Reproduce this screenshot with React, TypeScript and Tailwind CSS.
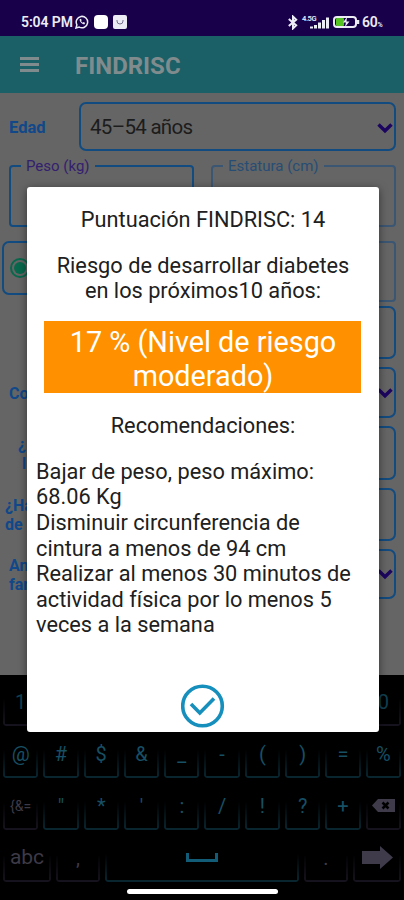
import { ReactNode } from "react";

const Chevron = () => (
  <svg
    className="h-3 w-4 shrink-0"
    viewBox="0 0 16 12"
    fill="none"
    stroke="#1c0560"
    strokeWidth="3.4"
  >
    <path d="M1.500 2.500 8 8.800l6.500-6.300" />
  </svg>
);

const StatusBar = () => (
  <div className="flex h-9 items-center bg-[#18004a] pt-2 pl-[21px] pr-[19px] text-[#ececf4]">
    <span className="w-[52px] whitespace-nowrap text-[14px] font-semibold tracking-[-0.1px]">
      5:04 PM
    </span>
    <svg className="ml-[2px] h-[14px] w-[14px]" viewBox="0 0 14 14" fill="none">
      <path
        d="M1 13l.9-3.2A5.7 5.7 0 1 1 4.200 12.100z"
        stroke="currentColor"
        strokeWidth="1.500"
      />
      <path
        d="M4.700 4.200c-.5 2.400 2.600 5.500 5 5l.3-1.400-1.500-.7-.7.7C6.900 7.300 6.400 6.700 6.100 6l.6-.7L6 3.700z"
        fill="currentColor"
      />
    </svg>
    <div className="ml-[5px] h-[14px] w-[14px] rounded-[4px] bg-white" />
    <div className="ml-[5px] flex h-[14px] w-[14px] items-center justify-center rounded-[2px] bg-[#ececf4]">
      <svg className="h-2 w-2" viewBox="0 0 8 8" fill="none" stroke="#77728f">
        <path d="M1 2v1a3 3 0 0 0 6 0V2" />
      </svg>
    </div>
    <svg
      className="ml-auto h-[15px] w-[10px]"
      viewBox="0 0 10 15"
      fill="none"
      stroke="currentColor"
      strokeWidth="2"
    >
      <path d="M.8 4l7.400 6.400L5 13.400V1.600L8.200 4.600.8 11" />
    </svg>
    <div className="ml-1 flex h-[14px] w-[27px] items-end">
      <div className="flex h-full flex-col text-[7.500px] font-semibold leading-[7px] tracking-[-0.4px]">
        <span className="w-[15px] whitespace-nowrap">4.5G</span>
      </div>
      <svg className="-ml-[8px] h-[13px] w-5 shrink-0" viewBox="0 0 20 13" fill="currentColor">
        <path d="M1 10.500h3v2H1zM5 9h3v3.500H5zM9 6.500h3v6H9zM13 4h3v8.500h-3zM17 1.500h3v11h-3z" />
      </svg>
    </div>
    <svg className="ml-1 h-3 w-[27px]" viewBox="0 0 27 12" fill="none">
      <rect x="1" y="1" width="22" height="10" rx="3" stroke="currentColor" strokeWidth="2" />
      <rect x="3" y="2" width="8" height="8" rx="1" fill="#55c322" />
      <path d="M14 1l-4 5.500h3L12 11l4.500-5.500h-3z" fill="currentColor" />
      <path d="M25 4v4" stroke="currentColor" strokeWidth="2.500" />
    </svg>
    <span className="ml-[2px] w-[23px] whitespace-nowrap text-[14px] font-semibold tracking-[-0.3px]">
      60<span className="text-[7px]">%</span>
    </span>
  </div>
);

interface FieldProps {
  label: string;
  className: string;
  textClass: string;
}

const OutlinedField = ({ label, className, textClass }: FieldProps) => (
  <fieldset className={`h-[70px] w-[185px] rounded-[4px] border-2 pl-[10px] ${className}`}>
    <legend className={`px-[5px] text-[15px] leading-[18px] ${textClass}`}>{label}</legend>
  </fieldset>
);

interface QuestionProps {
  label: ReactNode;
  select?: boolean;
  rowClass: string;
}

const Question = ({ label, select, rowClass }: QuestionProps) => (
  <div className={`flex items-center justify-between ${rowClass}`}>
    <div className="w-10 whitespace-nowrap pt-[1px] text-[16px] font-bold leading-[19px] text-[#10488a]">
      {label}
    </div>
    <div className="flex h-full w-60 items-center justify-end rounded-[7px] border-2 border-[#124b80] pr-[1px]">
      {select && <Chevron />}
    </div>
  </div>
);

interface KeyProps {
  children?: ReactNode;
  muted?: boolean;
  className?: string;
}

const Key = ({ children, muted, className = "flex-1" }: KeyProps) => (
  <div
    className={`relative flex h-[37px] items-center justify-center pb-[12px] ${
      muted ? "text-[#3d3a47]" : "text-[#174f64]"
    } ${className}`}
  >
    <span
      className={`absolute inset-x-0 bottom-0 h-7 rounded-b-[3px] border-2 border-t-0 [mask-image:linear-gradient(transparent,black)] ${
        muted ? "border-[#17131f]" : "border-[#092731]"
      }`}
    />
    {children}
  </div>
);

const Keyboard = () => (
  <div className="flex h-[225px] flex-col gap-[15px] bg-black px-[3px] pt-[14px] text-[20px] leading-none">
    <div className="flex gap-[5px]">
      {["1", "", "", "", "", "", "", "", "", "0"].map((key, i) => (
        <Key key={i} muted>
          <span className="text-[#124051]">{key}</span>
        </Key>
      ))}
    </div>
    <div className="flex gap-[5px]">
      {["@", "#", "$", "&", "_", "-", "(", ")", "=", "%"].map((key) => (
        <Key key={key}>{key}</Key>
      ))}
    </div>
    <div className="flex gap-[5px]">
      <Key muted>
        <span className="text-[14px]">{"{&="}</span>
      </Key>
      {['"', "*", "'", ":", "/", "!", "?", "+"].map((key) => (
        <Key key={key}>{key}</Key>
      ))}
      <Key muted>
        <svg className="h-[13px] w-[23px]" viewBox="0 0 23 13">
          <path d="M0 6.500 6 0h17v13H6z" fill="#3f3b4b" />
          <path d="M10.500 3.500l6 6m0-6-6 6" stroke="#000" strokeWidth="2.500" />
        </svg>
      </Key>
    </div>
    <div className="flex gap-[5px]">
      <Key muted className="w-12">
        <span className="text-[21px]">abc</span>
      </Key>
      <Key muted className="w-11">
        ,
      </Key>
      <Key className="flex-1">
        <svg className="h-[10px] w-8" viewBox="0 0 32 10" fill="none">
          <path d="M1.500 0v7.500h29V0" stroke="#125c78" strokeWidth="3" />
        </svg>
      </Key>
      <Key muted className="w-11">
        .
      </Key>
      <Key muted className="w-12">
        <svg className="h-[23px] w-[31px]" viewBox="0 0 31 23" fill="#3f3b4b">
          <path d="M0 5h18V0l13 11.500L18 23v-5H0z" />
        </svg>
      </Key>
    </div>
    <div className="mx-auto mt-[-8px] h-[5px] w-[151px] shrink-0 rounded-full bg-white" />
  </div>
);

const ResultDialog = () => (
  <div className="absolute left-[27px] top-[187px] flex h-[545px] w-[352px] flex-col items-center rounded-[3px] bg-white pt-5 text-[21.750px] leading-[25.600px] text-[#202020] shadow-[0_2px_8px_rgba(0,0,0,0.5)]">
    <p className="whitespace-nowrap">Puntuación FINDRISC: 14</p>
    <p className="mt-5 whitespace-nowrap text-center">
      Riesgo de desarrollar diabetes
      <br />
      en los próximos10 años:
    </p>
    <div className="mr-[2px] mt-[17px] h-[72px] w-[317px] whitespace-nowrap bg-[#ff9000] pl-[2px] pt-1 text-center text-[28.800px] leading-[34px] text-white">
      17 % (Nivel de riesgo
      <br />
      moderado)
    </div>
    <p className="mt-5">Recomendaciones:</p>
    <p className="mt-[20.500px] w-full whitespace-nowrap pl-[9px]">
      Bajar de peso, peso máximo:
      <br />
      68.06 Kg
      <br />
      Disminuir circunferencia de
      <br />
      cintura a menos de 94 cm
      <br />
      Realizar al menos 30 minutos de
      <br />
      actividad física por lo menos 5
      <br />
      veces a la semana
    </p>
    <svg
      className="mb-1 mt-auto h-11 w-11 shrink-0"
      viewBox="0 0 44 44"
      fill="none"
      stroke="#168fbd"
      strokeWidth="3.600"
    >
      <circle cx="21.500" cy="22" r="19.800" />
      <path d="M10 20l8.800 9L33 14.500" />
    </svg>
  </div>
);

const App = () => {
  return (
    <div className="relative h-[900px] w-[404px] overflow-hidden bg-[#656565] font-['Roboto',sans-serif]">
      <StatusBar />
      <div className="flex h-[57px] items-center bg-[#1b6066] pl-5 text-[#808b8d]">
        <div className="flex w-[19px] flex-col gap-[3px]">
          <div className="h-[3px] bg-current" />
          <div className="h-[3px] bg-current" />
          <div className="h-[3px] bg-current" />
        </div>
        <span className="ml-9 pt-[3px] text-[24px] font-bold">FINDRISC</span>
      </div>

      <div className="flex h-[582px] flex-col pt-[9px]">
        <div className="flex items-center pl-[9px]">
          <span className="w-[70px] pt-[3px] text-[16.500px] font-bold text-[#10488a]">Edad</span>
          <div className="flex h-[49px] w-[317px] items-center justify-between rounded-[7px] border-2 border-[#124b80] pl-[9px] pt-[2px] pr-[1px] text-[20.500px] tracking-[-0.7px] text-[#1c1c1c]">
            <span>45–54 años</span>
            <Chevron />
          </div>
        </div>

        <div className="mt-[6px] flex gap-[17px] pl-[9px]">
          <OutlinedField
            label="Peso (kg)"
            className="border-[#124b80]"
            textClass="text-[#33206f]"
          />
          <OutlinedField
            label="Estatura (cm)"
            className="border-[#3b5673]"
            textClass="text-[#274d75]"
          />
        </div>

        <div className="mt-[14px] flex h-[61px] justify-between pl-[2px] pr-2">
          <div className="flex h-[54px] w-[120px] items-center rounded-[7px] border-2 border-[#124b80] pl-[6px]">
            <div className="flex h-5 w-5 items-center justify-center rounded-full border-2 border-[#08684c]">
              <div className="h-3 w-3 rounded-full bg-[#08684c]" />
            </div>
          </div>
          <div className="w-[120px] rounded-[4px] border-2 border-[#3b5673]" />
        </div>

        <div className="mt-1 flex flex-col gap-[8px] pr-2">
          <Question rowClass="h-[53px]" label="" />
          <Question rowClass="h-[51px]" label={<div className="pl-[9px]">Co</div>} select />
          <Question
            rowClass="h-[54px]"
            label={
              <div className="pl-[18px]">
                ¿
                <br />
                <span className="pl-1">l</span>
              </div>
            }
          />
          <Question
            rowClass="h-[53px]"
            label={
              <div className="pl-[5px]">
                ¿Ha
                <br />
                de
              </div>
            }
          />
          <Question
            rowClass="h-[50px]"
            label={
              <div className="pl-[9px]">
                An
                <br />
                fan
              </div>
            }
            select
          />
        </div>
      </div>

      <Keyboard />
      <ResultDialog />
    </div>
  );
};

export default App;
